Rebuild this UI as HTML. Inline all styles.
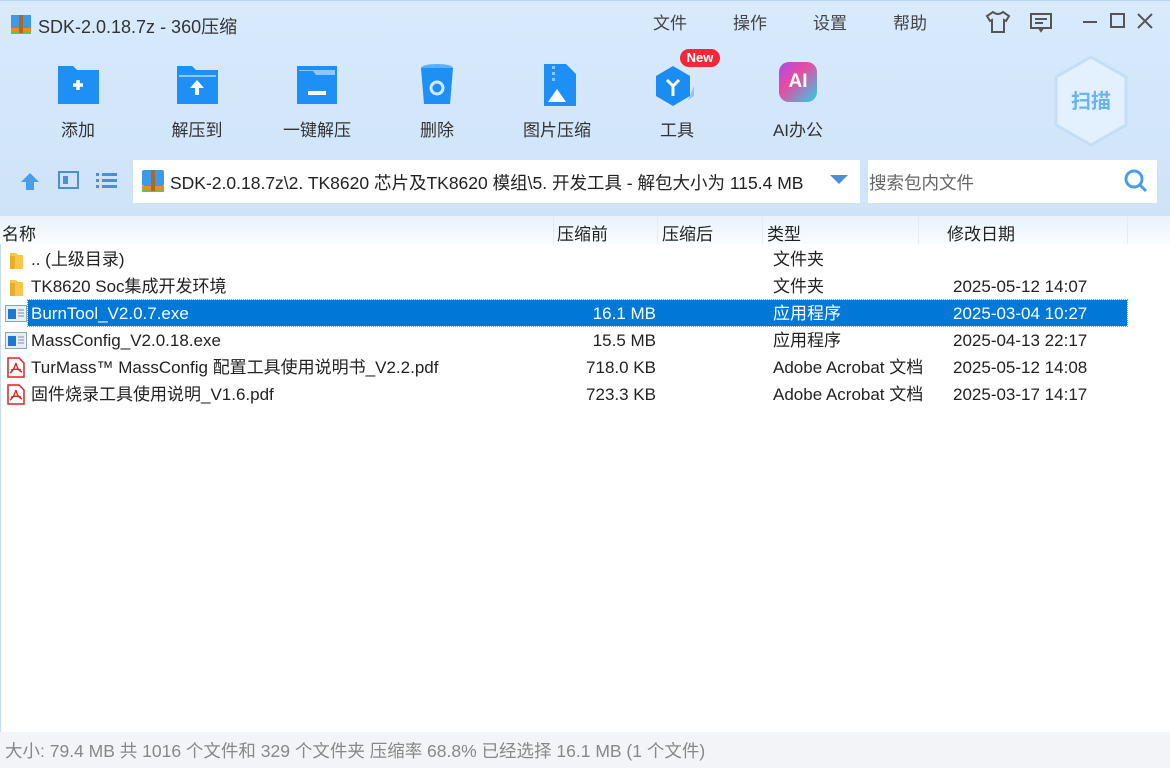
<!DOCTYPE html><html><head><meta charset="utf-8"><style>
*{margin:0;padding:0;box-sizing:border-box}
body{width:1170px;height:768px;overflow:hidden;font-family:"Liberation Sans","Noto Sans CJK SC",sans-serif;background:#fff;position:relative;color:#222}
.top{position:absolute;left:0;top:0;width:1170px;height:218px;background:linear-gradient(#d8eafc,#cfe3f8);border-top:1px solid #b8d4f0}
.abs{position:absolute}
.menu{top:9px;font-size:17px;color:#444}
.tb{position:absolute;top:62px;width:80px;text-align:center;font-size:17px;color:#333}
.tb .ic{height:48px;display:flex;justify-content:center;align-items:flex-start}
.tb .lb{margin-top:6px}
.hdr{position:absolute;top:216px;left:0;width:1170px;height:28px;background:linear-gradient(#e9f2fc,#fafcff);font-size:17px}
.hdr span{position:absolute;top:4px}
.row{position:absolute;left:0;width:1170px;height:27px;font-size:17px;line-height:27px}
.row span{position:absolute}
.row span.r{right:514px}
.sel{background:#0078d7;color:#fff;outline:1px dotted #e08a30}
</style></head><body>
<div class="top"></div>
<svg class="abs" style="left:10px;top:14px" width="22" height="20"><rect x="1" y="1" width="20" height="13" fill="#3b9be8"/><rect x="1" y="14" width="20" height="3" fill="#f08a1a"/><rect x="1" y="17" width="20" height="3" fill="#6ac04a"/><rect x="9" y="1" width="4" height="18" fill="#a86a2a"/></svg>
<div class="abs" style="left:38px;top:13px;font-size:18px;color:#333">SDK-2.0.18.7z - 360压缩</div>
<div class="abs menu" style="left:653px">文件</div>
<div class="abs menu" style="left:733px">操作</div>
<div class="abs menu" style="left:813px">设置</div>
<div class="abs menu" style="left:893px">帮助</div>
<svg class="abs" style="left:985px;top:10px" width="26" height="24" fill="none" stroke="#555" stroke-width="2"><path d="M8 2 L2 6 L5 11 L7 10 V22 H19 V10 L21 11 L24 6 L18 2 Q13 6 8 2Z"/></svg>
<svg class="abs" style="left:1030px;top:13px" width="22" height="20" fill="none" stroke="#555" stroke-width="2"><rect x="1" y="1" width="20" height="14"/><path d="M5 6h12M5 10h8M9 15l2 3 2-3"/></svg>
<div class="abs" style="left:1083px;top:21px;width:14px;height:2px;background:#555"></div>
<div class="abs" style="left:1110px;top:13px;width:15px;height:15px;border:2px solid #555"></div>
<svg class="abs" style="left:1137px;top:13px" width="16" height="16" stroke="#555" stroke-width="2"><path d="M1 1L15 15M15 1L1 15"/></svg>
<div class="tb" style="left:38px"><div class="ic"><svg width="46" height="44"><path d="M3 4h15l4 4h22v34H3z" fill="#1e8ff5"/><path d="M18 23h10M23 18v10" stroke="#fff" stroke-width="3.5"/></svg></div><div class="lb">添加</div></div>
<div class="tb" style="left:157px"><div class="ic"><svg width="46" height="44"><path d="M3 4h15l4 4h22v34H3z" fill="#1e8ff5"/><rect x="5" y="13" width="37" height="2" fill="#8cc8ff"/><path d="M23 18l-7 8h5v7h4v-7h5z" fill="#fff"/></svg></div><div class="lb">解压到</div></div>
<div class="tb" style="left:277px"><div class="ic"><svg width="46" height="44"><path d="M3 4h40v38H3z" fill="#1e8ff5"/><path d="M5 9h14l3 4h19V8H5z" fill="#8cc8ff"/><rect x="14" y="29" width="18" height="4" fill="#fff"/></svg></div><div class="lb">一键解压</div></div>
<div class="tb" style="left:397px"><div class="ic"><svg width="46" height="46"><ellipse cx="23" cy="6" rx="16" ry="4" fill="#5ab0ff"/><path d="M7 6h32l-3 36H10z" fill="#1e8ff5"/><circle cx="23" cy="26" r="6" fill="none" stroke="#cfe7ff" stroke-width="3"/></svg></div><div class="lb">删除</div></div>
<div class="tb" style="left:517px"><div class="ic"><svg width="46" height="46"><path d="M10 2h22l10 10v32H10z" fill="#1e8ff5"/><path d="M14 40l9-13 9 13z" fill="#fff"/><rect x="18" y="4" width="3" height="3" fill="#8cc8ff"/><rect x="18" y="10" width="3" height="3" fill="#8cc8ff"/><rect x="18" y="16" width="3" height="3" fill="#8cc8ff"/></svg></div><div class="lb">图片压缩</div></div>
<div class="tb" style="left:637px"><div class="ic"><svg width="50" height="46"><path d="M21 4l17 10v20l-17 10-17-10V14z" fill="#1a8cf2"/><path d="M42 24v10l-6 4z" fill="#8ec4f8"/><path d="M21 24l-6-6M21 24l6-6M21 24v10" stroke="#fff" stroke-width="3"/></svg></div><div class="lb">工具</div></div>
<div class="abs" style="left:680px;top:49px;width:40px;height:18px;border-radius:9px;background:#f0283a;color:#fff;font-size:13px;font-weight:bold;text-align:center;line-height:18px">New</div>
<div class="tb" style="left:758px"><div class="ic"><div style="width:38px;height:40px;border-radius:10px;background:linear-gradient(135deg,#a64df0,#e94aa0 40%,#2ad0e8);color:#fff;font-weight:bold;font-size:19px;line-height:40px">AI</div></div><div class="lb">AI办公</div></div>
<svg class="abs" style="left:1052px;top:55px" width="78" height="92"><path d="M39 2l35 20v48l-35 20-35-20V22z" fill="#e3f0fd" stroke="#c4def8" stroke-width="3"/><text x="39" y="53" text-anchor="middle" font-size="20" font-weight="bold" fill="#6ab4f4" font-family="Noto Sans CJK SC,sans-serif">扫描</text></svg>
<svg class="abs" style="left:19px;top:171px" width="22" height="20"><path d="M11 2l9 9h-5v8H7v-8H2z" fill="#4a9ee8"/></svg>
<svg class="abs" style="left:58px;top:171px" width="22" height="18"><rect x="1" y="1" width="19" height="16" fill="#cfe4f8" stroke="#4a8fd8" stroke-width="2"/><rect x="5" y="5" width="5" height="8" fill="#4a8fd8"/></svg>
<svg class="abs" style="left:96px;top:172px" width="22" height="16" fill="#4a8fd8"><rect x="0" y="1" width="3" height="3"/><rect x="6" y="1" width="15" height="3"/><rect x="0" y="7" width="3" height="3"/><rect x="6" y="7" width="15" height="3"/><rect x="0" y="13" width="3" height="3"/><rect x="6" y="13" width="15" height="3"/></svg>
<div class="abs" style="left:133px;top:160px;width:727px;height:43px;background:#fff"></div>
<svg class="abs" style="left:141px;top:169px" width="24" height="24"><rect x="1" y="1" width="22" height="16" rx="2" fill="#3b9be8"/><rect x="1" y="17" width="22" height="3" fill="#f08a1a"/><rect x="1" y="20" width="22" height="3" fill="#6ac04a"/><rect x="10" y="1" width="4" height="21" fill="#a86a2a"/></svg>
<div class="abs" style="left:170px;top:170px;font-size:17.5px;color:#222">SDK-2.0.18.7z\2. TK8620 芯片及TK8620 模组\5. 开发工具 - 解包大小为 115.4 MB</div>
<svg class="abs" style="left:830px;top:175px" width="18" height="10"><path d="M0 0h18l-9 9z" fill="#4a8fd8"/></svg>
<div class="abs" style="left:868px;top:160px;width:289px;height:43px;background:#fff"></div>
<div class="abs" style="left:869px;top:170px;font-size:17.5px;color:#666">搜索包内文件</div>
<svg class="abs" style="left:1123px;top:168px" width="26" height="26" fill="none" stroke="#4a9ee8" stroke-width="3"><circle cx="11" cy="11" r="8"/><path d="M17 17l6 6"/></svg>
<div class="hdr"><span style="left:2px">名称</span><span style="left:557px">压缩前</span><span style="left:662px">压缩后</span><span style="left:767px">类型</span><span style="left:947px">修改日期</span>
<div class="abs" style="left:553px;top:0;width:1px;height:28px;background:#e4ebf3"></div><div class="abs" style="left:657px;top:0;width:1px;height:28px;background:#e4ebf3"></div><div class="abs" style="left:762px;top:0;width:1px;height:28px;background:#e4ebf3"></div><div class="abs" style="left:918px;top:0;width:1px;height:28px;background:#e4ebf3"></div><div class="abs" style="left:1127px;top:0;width:1px;height:28px;background:#e4ebf3"></div></div>
<div class="row" style="top:246px"><svg class="abs" style="left:8px;top:4px" width="16" height="20"><path d="M2 3h6l2 2h5v14H2z" fill="#f7c64a"/><path d="M2 6h5v13H2z" fill="#e8ae2a"/></svg><span style="left:31px">.. (上级目录)</span><span style="left:773px">文件夹</span></div>
<div class="row" style="top:273px"><svg class="abs" style="left:8px;top:4px" width="16" height="20"><path d="M2 3h6l2 2h5v14H2z" fill="#f7c64a"/><path d="M2 6h5v13H2z" fill="#e8ae2a"/></svg><span style="left:31px">TK8620 Soc集成开发环境</span><span style="left:773px">文件夹</span><span style="left:953px">2025-05-12 14:07</span></div>
<div class="row" style="top:300px"><div class="abs sel" style="left:28px;top:0;width:1099px;height:26px"></div><svg class="abs" style="left:5px;top:5px" width="22" height="17"><rect x="0.5" y="0.5" width="21" height="16" fill="#e8eef5" stroke="#8aa"/><rect x="3" y="4" width="8" height="10" fill="#1e78d0"/><path d="M13 5h6M13 8h6M13 11h6" stroke="#889"/></svg><span style="left:31px;color:#fff">BurnTool_V2.0.7.exe</span><span class="r" style="color:#fff">16.1 MB</span><span style="left:773px;color:#fff">应用程序</span><span style="left:953px;color:#fff">2025-03-04 10:27</span></div>
<div class="row" style="top:327px"><svg class="abs" style="left:5px;top:5px" width="22" height="17"><rect x="0.5" y="0.5" width="21" height="16" fill="#e8eef5" stroke="#8aa"/><rect x="3" y="4" width="8" height="10" fill="#1e78d0"/><path d="M13 5h6M13 8h6M13 11h6" stroke="#889"/></svg><span style="left:31px">MassConfig_V2.0.18.exe</span><span class="r">15.5 MB</span><span style="left:773px">应用程序</span><span style="left:953px">2025-04-13 22:17</span></div>
<div class="row" style="top:354px"><svg class="abs" style="left:7px;top:3px" width="18" height="21"><path d="M1 1h11l5 5v14H1z" fill="#fff" stroke="#d22" stroke-width="1.5"/><path d="M9 6c-2 6-4 9-6 10M9 6c1 5 3 8 6 9M4 13c3-1 7-1 10 0" stroke="#d22" fill="none" stroke-width="1.3"/></svg><span style="left:31px">TurMass™ MassConfig 配置工具使用说明书_V2.2.pdf</span><span class="r">718.0 KB</span><span style="left:773px">Adobe Acrobat 文档</span><span style="left:953px">2025-05-12 14:08</span></div>
<div class="row" style="top:381px"><svg class="abs" style="left:7px;top:3px" width="18" height="21"><path d="M1 1h11l5 5v14H1z" fill="#fff" stroke="#d22" stroke-width="1.5"/><path d="M9 6c-2 6-4 9-6 10M9 6c1 5 3 8 6 9M4 13c3-1 7-1 10 0" stroke="#d22" fill="none" stroke-width="1.3"/></svg><span style="left:31px">固件烧录工具使用说明_V1.6.pdf</span><span class="r">723.3 KB</span><span style="left:773px">Adobe Acrobat 文档</span><span style="left:953px">2025-03-17 14:17</span></div>
<div class="abs" style="left:0;top:244px;width:1px;height:488px;background:#c8dcf0"></div>
<div class="abs" style="left:0;top:732px;width:1170px;height:36px;background:#f2f4f7;font-size:17.5px;color:#888;padding:6px 0 0 5px">大小: 79.4 MB 共 1016 个文件和 329 个文件夹 压缩率 68.8% 已经选择 16.1 MB (1 个文件)</div>
</body></html>
